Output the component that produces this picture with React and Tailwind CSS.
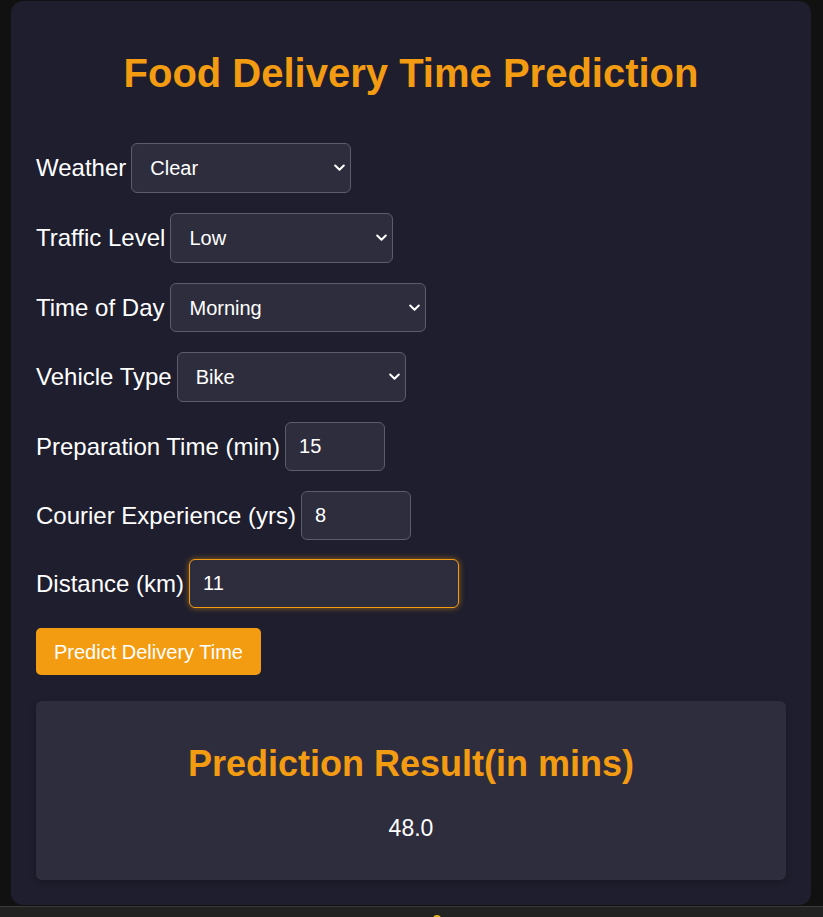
import React from "react";

const font = { fontFamily: '"Liberation Sans", Arial, sans-serif' };

function Chevron() {
  return (
    <svg
      className="pointer-events-none absolute right-[6px] top-1/2 -translate-y-1/2"
      width="11"
      height="8"
      viewBox="0 0 11 8"
      fill="none"
    >
      <path d="M1.2 1.5 L5.5 5.8 L9.8 1.5" stroke="#ffffff" strokeWidth="2" strokeLinecap="round" strokeLinejoin="round" />
    </svg>
  );
}

function SelectRow({ label, value, options, width, height, gap }) {
  return (
    <div className={`flex items-center ${gap}`}>
      <label className="text-[24px] text-white leading-none">{label}</label>
      <div className={`relative ${width} ${height}`}>
        <select
          defaultValue={value}
          className="h-full w-full appearance-none rounded-[6px] border border-[#5d5c6b] bg-[#2e2d3d] pl-[18px] text-[20px] text-white outline-none"
          style={font}
        >
          {options.map((o) => (
            <option key={o} value={o}>
              {o}
            </option>
          ))}
        </select>
        <Chevron />
      </div>
    </div>
  );
}

function InputRow({ label, value, width, focused }) {
  return (
    <div className="flex items-center gap-[5px]">
      <label className="text-[24px] text-white leading-none">{label}</label>
      <input
        type="number"
        defaultValue={value}
        className={
          focused
            ? `h-[49px] ${width} rounded-[6px] border border-[#f39c12] bg-[#2e2d3d] pl-[13px] text-[20px] text-white outline-none shadow-[0_0_6px_rgba(243,156,18,0.55)] [appearance:textfield] [&::-webkit-inner-spin-button]:appearance-none`
            : `h-[49px] ${width} rounded-[6px] border border-[#5d5c6b] bg-[#2e2d3d] pl-[13px] text-[20px] text-white outline-none [appearance:textfield] [&::-webkit-inner-spin-button]:appearance-none`
        }
        style={font}
      />
    </div>
  );
}

export default function App() {
  return (
    <div className="min-h-[917px] w-full bg-[#111111] flex flex-col" style={font}>
      <div className="mx-[11px] mt-px flex w-[800px] flex-col rounded-[12px] bg-[#1e1e2e] px-[25px] pt-[25px] pb-[25px]">
        <h1 className="mt-[24px] text-center text-[40px] font-bold leading-[46px] text-[#f39c12]">
          Food Delivery Time Prediction
        </h1>

        <div className="mt-[47px] flex flex-col gap-[20px]">
          <SelectRow
            label="Weather"
            value="Clear"
            options={["Clear", "Rainy", "Snowy", "Foggy", "Windy"]}
            width="w-[220px]"
            height="h-[50px]"
            gap="gap-[5px]"
          />
          <SelectRow
            label="Traffic Level"
            value="Low"
            options={["Low", "Medium", "High"]}
            width="w-[223px]"
            height="h-[50px]"
            gap="gap-[5px]"
          />
          <SelectRow
            label="Time of Day"
            value="Morning"
            options={["Morning", "Afternoon", "Evening", "Night"]}
            width="w-[256px]"
            height="h-[49px]"
            gap="gap-[6px]"
          />
          <SelectRow
            label="Vehicle Type"
            value="Bike"
            options={["Bike", "Scooter", "Car"]}
            width="w-[229px]"
            height="h-[50px]"
            gap="gap-[5px]"
          />
          <InputRow label="Preparation Time (min)" value="15" width="w-[100px]" />
          <InputRow label="Courier Experience (yrs)" value="8" width="w-[110px]" />
          <div className="-mt-[1px]">
            <InputRow label="Distance (km)" value="11" width="w-[270px]" focused />
          </div>
        </div>

        <div className="mt-[20px]">
          <button className="h-[47px] rounded-[5px] bg-[#f39c12] px-[18px] text-[20px] text-white" style={font}>
            Predict Delivery Time
          </button>
        </div>

        <div className="mt-[26px] flex h-[179px] flex-col items-center rounded-[6px] bg-[#2e2d3d] pt-[42px] shadow-[0_2px_6px_rgba(0,0,0,0.25)]">
          <h2 className="text-[36px] font-bold leading-[41px] text-[#f39c12]">Prediction Result(in mins)</h2>
          <p className="mt-[31px] text-[23px] leading-[26px] text-white">48.0</p>
        </div>
      </div>

      <div className="mt-[1px] flex-1 border-t border-[#3a3a3a] bg-[#222222] flex justify-center">
        <div className="mt-[8px] ml-[50px] h-[4px] w-[8px] rounded-t-full bg-[#e0b01a]" />
      </div>
    </div>
  );
}
